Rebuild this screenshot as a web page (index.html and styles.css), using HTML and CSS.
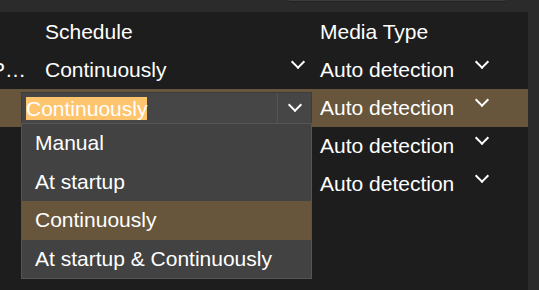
FILE: index.html
```html
<!DOCTYPE html>
<html lang="en">
  <head>
    <meta charset="UTF-8"/>
    <meta name="viewport" content="width=device-width, initial-scale=1.0">
    <link rel="stylesheet" href="styles.css">
    <title>Schedule</title>
  </head>
  <body>
    <div class="topBar">
      <div class="topBar_field"></div>
    </div>
    <div class="panel">
      <div class="grid">
        <div class="cell cell_head"></div>
        <div class="cell cell_head">Schedule</div>
        <div class="cell cell_head">Media Type</div>
        <div class="cell cell_head"></div>

        <div class="cell cell_clip"><span>RTSP…</span></div>
        <div class="cell">Continuously<span class="chevron"></span></div>
        <div class="cell">Auto detection<span class="chevron"></span></div>
        <div class="cell"></div>

        <div class="cell row_selected"></div>
        <div class="cell row_selected"></div>
        <div class="cell row_selected">Auto detection<span class="chevron"></span></div>
        <div class="cell row_selected"></div>

        <div class="cell"></div>
        <div class="cell"></div>
        <div class="cell">Auto detection<span class="chevron"></span></div>
        <div class="cell"></div>

        <div class="cell"></div>
        <div class="cell"></div>
        <div class="cell">Auto detection<span class="chevron"></span></div>
        <div class="cell"></div>
      </div>

      <div class="comboEditor">
        <div class="comboEditor_text"><span class="comboEditor_selection">Continuously</span></div>
        <div class="comboEditor_button"><span class="chevron"></span></div>
      </div>
      <ul class="comboList">
        <li class="comboList_item">Manual</li>
        <li class="comboList_item">At startup</li>
        <li class="comboList_item comboList_item_active">Continuously</li>
        <li class="comboList_item">At startup &amp; Continuously</li>
      </ul>
    </div>
  </body>
</html>
```

FILE: styles.css
```css
body {
  margin: 0;
  background-color: rgb(43, 43, 43);
  font-family: "Liberation Sans", Arial, sans-serif;
  font-size: 21px;
  color: white;
  overflow: hidden;
}

.topBar {
  height: 12px;
}
  .topBar_field {
    margin-left: 289px;
    width: 216px;
    height: 1px;
    background-color: rgb(62, 62, 62);
    border-bottom: 1px solid rgb(35, 35, 35);
  }

.panel {
  position: relative;
  width: 528px;
  height: 278px;
  background-color: rgb(29, 29, 29);
}

.grid {
  display: grid;
  grid-template-columns: 33px 277px 190px 1fr;
  grid-template-rows: 39px 38px 38px 38px 38px;
}
  .cell {
    display: flex;
    align-items: center;
    justify-content: space-between;
    white-space: nowrap;
    line-height: 24px;
  }
  .cell:nth-child(4n+2) {
    padding: 0 4px 0 12px;
  }
  .cell:nth-child(4n+3) {
    padding: 0 10px 0 10px;
  }
  .cell_head {
    padding-bottom: 4px;
  }
  .cell_clip {
    justify-content: flex-end;
    overflow: hidden;
    padding-right: 7px;
  }
  .row_selected {
    background-color: rgb(103, 86, 59);
  }

.chevron {
  flex: none;
  width: 8px;
  height: 8px;
  margin: 0 3px 0 0;
  border-right: 2.5px solid white;
  border-bottom: 2.5px solid white;
  transform: translateY(-8px) rotate(45deg);
}

.comboEditor {
  position: absolute;
  left: 21px;
  top: 80px;
  width: 291px;
  height: 32px;
  box-sizing: border-box;
  display: flex;
  background-color: rgb(70, 70, 70);
  border: 1px solid rgb(60, 60, 60);
}
  .comboEditor_text {
    flex: 1;
    display: flex;
    align-items: center;
    padding-left: 4px;
  }
  .comboEditor_selection {
    background-color: rgb(255, 196, 110);
    line-height: 23px;
  }
  .comboEditor_button {
    width: 33px;
    display: flex;
    align-items: center;
    justify-content: center;
    border-left: 1px solid rgb(84, 84, 84);
  }
  .comboEditor_button .chevron {
    margin: 0;
    transform: translateY(-3px) rotate(45deg);
  }

.comboList {
  position: absolute;
  left: 21px;
  top: 111px;
  width: 291px;
  box-sizing: border-box;
  margin: 0;
  padding: 0;
  list-style: none;
  background-color: rgb(66, 66, 66);
  border: 1px solid rgb(85, 85, 85);
}
  .comboList_item {
    height: 38.5px;
    line-height: 38.5px;
    padding-left: 13px;
    white-space: nowrap;
  }
  .comboList_item_active {
    background-color: rgb(103, 86, 59);
  }
```
